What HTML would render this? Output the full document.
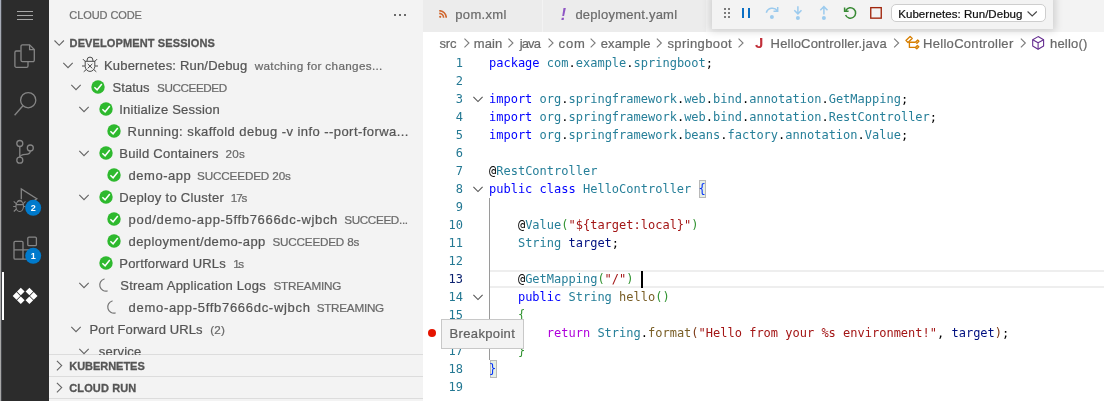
<!DOCTYPE html>
<html><head><meta charset="utf-8">
<style>
*{box-sizing:border-box;margin:0;padding:0}
html,body{width:1104px;height:401px;overflow:hidden;background:#fff}
body{position:relative;font-family:"Liberation Sans",sans-serif;font-size:13px;color:#616161}
.abs{position:absolute}
#act{left:0;top:0;width:48.6px;height:401px;background:#2c2c2c}
#side{left:48px;top:0;width:375px;height:401px;background:#f3f3f3}
#ed{left:423px;top:0;width:681px;height:401px;background:#fff}
.t{position:absolute;white-space:nowrap;line-height:22px;height:22px;color:#616161;font-size:13px;-webkit-text-stroke:0.22px currentColor}
.cl{position:absolute;white-space:pre;font-family:"DejaVu Sans Mono","Liberation Mono",monospace;font-size:12px;line-height:18px;height:18px;color:#000}
.ln{position:absolute;width:40px;text-align:right;font-family:"DejaVu Sans Mono","Liberation Mono",monospace;font-size:12px;line-height:18px;height:18px;color:#237893}
.k{color:#0000ff}.ty{color:#267f99}.s{color:#a31515}.v{color:#001080}.f{color:#795e26}.c{color:#af00db}
.b1{color:#0431fa}.b2{color:#319331}.b3{color:#7b3814}
.hl{position:absolute;left:0;width:374px;height:1px;background:#dcdcdc}
#root{position:absolute;left:0;top:0;width:1104px;height:401px;overflow:hidden;will-change:transform}
</style></head><body><div id="root">
<!-- activity bar -->
<div id="side" class="abs"></div>
<div id="act" class="abs"></div>
<div class="abs" style="left:0;top:0;width:1px;height:401px;background:linear-gradient(#a8aebb 0,#a3a5aa 70px,#a4a4a4 150px,#a8a8a8 401px)"></div>
<div class="abs" style="left:1px;top:0;width:1px;height:401px;background:#45474c"></div>
<div class="abs" style="left:2px;top:272px;width:2px;height:48px;background:#fff"></div>
<svg class="abs" style="left:0;top:0" width="49" height="401" viewBox="0 0 49 401" fill="none" stroke="#858585" stroke-width="1.3">
 <!-- hamburger -->
 <g stroke="#a6a6a6" stroke-width="1"><path d="M17 11.5H33M17 15.5H33M17 19.5H33"/></g>
 <!-- files -->
 <path d="M21 60.4V46.3a1.4 1.4 0 0 1 1.4-1.4H29.6L34.3 49.6V60.300a1.4 1.4 0 0 1-1.4 1.4H22.4a1.4 1.4 0 0 1-1.4-1.4Z"/>
 <path d="M29.6 45V49.6H34.3"/>
 <path d="M20.6 51H16.3a1.4 1.4 0 0 0-1.4 1.4V65.900a1.4 1.4 0 0 0 1.4 1.4H26.6a1.4 1.4 0 0 0 1.4-1.4V62"/>
 <!-- search -->
 <circle cx="28.2" cy="100.2" r="7.6"/>
 <path d="M22.9 105.8L14.6 115.2"/>
 <!-- scm -->
 <circle cx="19.8" cy="143.5" r="3"/><circle cx="19.8" cy="160.2" r="3"/><circle cx="30.3" cy="148" r="3"/>
 <path d="M19.8 146.5V157.2"/>
 <path d="M30.3 151C30.3 153.6 28.4 154.3 25.6 154.4C22.2 154.5 20.2 155.2 19.8 157.2"/>
 <!-- debug -->
 <path d="M21.3 199.2V189L36.800 198.800L33.200 201.200" stroke-width="1.3"/>
 <g stroke-width="1.1">
 <ellipse cx="19.700" cy="206.200" rx="3.8" ry="5.3"/>
 <path d="M16 204.600H23.400M17.400 202A2.4 2.4 0 0 1 22 202M15.900 206.500H13.200M16.200 203.600L13.700 201.400M16.400 209L13.800 211.500M23.500 206.500H25.600M23.200 203.600L25.500 201.400"/>
 </g>
 <!-- extensions -->
 <path d="M14 249.8V242.6a1.2 1.2 0 0 1 1.2-1.2H21.8a1.2 1.2 0 0 1 1.2 1.2V249.8ZM14 249.8H23V259.2H15.2a1.2 1.2 0 0 1-1.2-1.2ZM23 249.8H32V259.2H23" stroke-width="1.3"/>
 <rect x="27.8" y="237.1" width="8.6" height="8.6" rx="1.2"/>
 <!-- badges -->
 <g stroke="none"><circle cx="33.2" cy="207.8" r="8" fill="#007acc"/><circle cx="33.2" cy="255.8" r="8" fill="#007acc"/></g>
 <!-- cloud code -->
 <g stroke="none" fill="#fff">
  <path d="M20.8 287.7l3.8 3.8-3.8 3.8-3.8-3.8ZM29.4 287.7l3.8 3.8-3.8 3.8-3.8-3.8ZM16.5 292.1l3.8 3.8-3.8 3.8-3.8-3.8ZM33.7 292.1l3.8 3.8-3.8 3.8-3.8-3.8ZM20.8 296.5l3.8 3.8-3.8 3.8-3.8-3.8ZM29.4 296.5l3.8 3.8-3.8 3.8-3.8-3.8Z"/>
 </g>
</svg>
<div class="abs" style="left:25.2px;top:199.8px;width:16px;height:16px;line-height:16px;text-align:center;color:#fff;font-size:9px;font-weight:bold">2</div>
<div class="abs" style="left:25.2px;top:247.8px;width:16px;height:16px;line-height:16px;text-align:center;color:#fff;font-size:9px;font-weight:bold">1</div>

<!-- sidebar -->
<div class="hl" style="left:49px;top:354px"></div>
<div class="hl" style="left:49px;top:376px"></div>
<div class="hl" style="left:49px;top:398px"></div>
<svg class="abs" style="left:394px;top:14px" width="12" height="2"><rect x="0" y="0" width="2" height="2" fill="#6a6a6a"/><rect x="5" y="0" width="2" height="2" fill="#6a6a6a"/><rect x="10" y="0" width="2" height="2" fill="#6a6a6a"/></svg>
<!-- bug-off icon -->
<svg class="abs" style="left:80px;top:54px" width="20" height="20" viewBox="80 54 20 20" fill="none" stroke="#4a4a4a" stroke-width="1">
 <path d="M87.1 61.2V60A2.9 2.9 0 0 1 92.9 60V61.2"/>
 <path d="M84.8 61.3H95.2"/>
 <path d="M85.2 61.3V66.4A4.8 5 0 0 0 94.8 66.400V61.3"/>
 <path d="M85.2 61.4L82.9 59.100M94.8 61.400L97.100 59.100M85 66H82M95 66H98M86.300 69.500L83.700 71.800M93.700 69.500L96.300 71.800M87.700 63.900L92.300 68.400M92.300 63.900L87.700 68.400"/>
</svg>
<div class="abs" style="left:49px;top:340px;width:374px;height:15px;overflow:hidden"><div class="t" style="left:49.70px;top:1px;color:#555;letter-spacing:0.242px">service</div><svg class="abs" style="left:0;top:0;overflow:visible" width="1" height="1"><path d="M30.30 8.90 L35.00 13.70 L39.70 8.90" fill="none" stroke="#646464" stroke-width="1.1" stroke-linejoin="miter"/></svg></div>
<svg class="abs" style="left:0;top:0;overflow:visible" width="1" height="1"><path d="M54.50 40.50 L59.20 45.30 L63.90 40.50" fill="none" stroke="#646464" stroke-width="1.1" stroke-linejoin="miter"/></svg>
<svg class="abs" style="left:0;top:0;overflow:visible" width="1" height="1"><path d="M56.90 360.90 L61.70 365.60 L56.90 370.30" fill="none" stroke="#646464" stroke-width="1.1" stroke-linejoin="miter"/></svg>
<svg class="abs" style="left:0;top:0;overflow:visible" width="1" height="1"><path d="M56.90 382.90 L61.70 387.60 L56.90 392.30" fill="none" stroke="#646464" stroke-width="1.1" stroke-linejoin="miter"/></svg>
<svg class="abs" style="left:0;top:0;overflow:visible" width="1" height="1"><path d="M63.30 62.90 L68.00 67.70 L72.70 62.90" fill="none" stroke="#646464" stroke-width="1.1" stroke-linejoin="miter"/></svg>
<svg class="abs" style="left:0;top:0;overflow:visible" width="1" height="1"><path d="M71.30 84.90 L76.00 89.70 L80.70 84.90" fill="none" stroke="#646464" stroke-width="1.1" stroke-linejoin="miter"/></svg>
<svg class="abs" style="left:0;top:0;overflow:visible" width="1" height="1"><path d="M79.30 106.90 L84.00 111.70 L88.70 106.90" fill="none" stroke="#646464" stroke-width="1.1" stroke-linejoin="miter"/></svg>
<svg class="abs" style="left:0;top:0;overflow:visible" width="1" height="1"><path d="M79.30 150.90 L84.00 155.70 L88.70 150.90" fill="none" stroke="#646464" stroke-width="1.1" stroke-linejoin="miter"/></svg>
<svg class="abs" style="left:0;top:0;overflow:visible" width="1" height="1"><path d="M79.30 194.90 L84.00 199.70 L88.70 194.90" fill="none" stroke="#646464" stroke-width="1.1" stroke-linejoin="miter"/></svg>
<svg class="abs" style="left:0;top:0;overflow:visible" width="1" height="1"><path d="M79.30 282.90 L84.00 287.70 L88.70 282.90" fill="none" stroke="#646464" stroke-width="1.1" stroke-linejoin="miter"/></svg>
<svg class="abs" style="left:0;top:0;overflow:visible" width="1" height="1"><path d="M71.30 326.90 L76.00 331.70 L80.70 326.90" fill="none" stroke="#646464" stroke-width="1.1" stroke-linejoin="miter"/></svg>
<svg class="abs" style="left:90.2px;top:79px" width="16" height="16" viewBox="0 0 16 16"><circle cx="8" cy="8" r="6.7" fill="#2eb92e"/><path d="M4.4 8.3 L7.1 10.8 L11.8 5.1" fill="none" stroke="#fff" stroke-width="1.5"/></svg>
<svg class="abs" style="left:98.2px;top:101px" width="16" height="16" viewBox="0 0 16 16"><circle cx="8" cy="8" r="6.7" fill="#2eb92e"/><path d="M4.4 8.3 L7.1 10.8 L11.8 5.1" fill="none" stroke="#fff" stroke-width="1.5"/></svg>
<svg class="abs" style="left:106.2px;top:123px" width="16" height="16" viewBox="0 0 16 16"><circle cx="8" cy="8" r="6.7" fill="#2eb92e"/><path d="M4.4 8.3 L7.1 10.8 L11.8 5.1" fill="none" stroke="#fff" stroke-width="1.5"/></svg>
<svg class="abs" style="left:98.2px;top:145px" width="16" height="16" viewBox="0 0 16 16"><circle cx="8" cy="8" r="6.7" fill="#2eb92e"/><path d="M4.4 8.3 L7.1 10.8 L11.8 5.1" fill="none" stroke="#fff" stroke-width="1.5"/></svg>
<svg class="abs" style="left:106.2px;top:167px" width="16" height="16" viewBox="0 0 16 16"><circle cx="8" cy="8" r="6.7" fill="#2eb92e"/><path d="M4.4 8.3 L7.1 10.8 L11.8 5.1" fill="none" stroke="#fff" stroke-width="1.5"/></svg>
<svg class="abs" style="left:98.2px;top:189px" width="16" height="16" viewBox="0 0 16 16"><circle cx="8" cy="8" r="6.7" fill="#2eb92e"/><path d="M4.4 8.3 L7.1 10.8 L11.8 5.1" fill="none" stroke="#fff" stroke-width="1.5"/></svg>
<svg class="abs" style="left:106.2px;top:211px" width="16" height="16" viewBox="0 0 16 16"><circle cx="8" cy="8" r="6.7" fill="#2eb92e"/><path d="M4.4 8.3 L7.1 10.8 L11.8 5.1" fill="none" stroke="#fff" stroke-width="1.5"/></svg>
<svg class="abs" style="left:106.2px;top:233px" width="16" height="16" viewBox="0 0 16 16"><circle cx="8" cy="8" r="6.7" fill="#2eb92e"/><path d="M4.4 8.3 L7.1 10.8 L11.8 5.1" fill="none" stroke="#fff" stroke-width="1.5"/></svg>
<svg class="abs" style="left:98.2px;top:255px" width="16" height="16" viewBox="0 0 16 16"><circle cx="8" cy="8" r="6.7" fill="#2eb92e"/><path d="M4.4 8.3 L7.1 10.8 L11.8 5.1" fill="none" stroke="#fff" stroke-width="1.5"/></svg>
<svg class="abs" style="left:98px;top:277px" width="16" height="16" viewBox="0 0 16 16"><path d="M6.2 2 A6.2 6.2 0 0 0 9.3 14" fill="none" stroke="#757575" stroke-width="1.15" stroke-linecap="round"/></svg>
<svg class="abs" style="left:106px;top:299px" width="16" height="16" viewBox="0 0 16 16"><path d="M6.2 2 A6.2 6.2 0 0 0 9.3 14" fill="none" stroke="#757575" stroke-width="1.15" stroke-linecap="round"/></svg>

<!-- editor -->
<div id="ed" class="abs"></div>
<!-- tab bar -->
<div class="abs" style="left:423px;top:0;width:681px;height:32px;background:#f3f3f3"></div>
<div class="abs" style="left:423px;top:0;width:119px;height:32px;background:#ececec"></div>
<div class="abs" style="left:543px;top:0;width:163px;height:32px;background:#ececec"></div>
<!-- rss icon -->
<svg class="abs" style="left:439px;top:9.8px" width="8" height="8" viewBox="0 0 8 8" fill="none" stroke="#d0672f" stroke-width="1.6"><circle cx="1.2" cy="6.8" r="1.1" fill="#d0672f" stroke="none"/><path d="M0.2 3.4A4.4 4.4 0 0 1 4.6 7.8M0.2 0.7A7.1 7.1 0 0 1 7.3 7.8"/></svg>
<!-- current line -->
<div class="abs" style="left:489px;top:270px;width:615px;height:18px;border-top:2px solid #eeeeee;border-bottom:2px solid #eeeeee"></div>
<!-- indent guide -->
<div class="abs" style="left:489px;top:198px;width:1px;height:162px;background:#9a9a9a"></div>
<!-- bracket match boxes -->
<div class="abs" style="left:699px;top:180px;width:7px;height:18px;border:1px solid #b9b9b9;background:rgba(0,100,0,0.1)"></div>
<div class="abs" style="left:489.5px;top:360px;width:7px;height:18px;border:1px solid #b9b9b9;background:rgba(0,100,0,0.1)"></div>
<div class="ln" style="left:423px;top:54px;color:#237893">1</div>
<div class="cl" style="left:489px;top:54px"><span class="k">package</span> <span class="ty">com</span>.<span class="ty">example</span>.<span class="ty">springboot</span>;</div>
<div class="ln" style="left:423px;top:72px;color:#237893">2</div>
<div class="ln" style="left:423px;top:90px;color:#237893">3</div>
<div class="cl" style="left:489px;top:90px"><span class="k">import</span> <span class="ty">org</span>.<span class="ty">springframework</span>.<span class="ty">web</span>.<span class="ty">bind</span>.<span class="ty">annotation</span>.<span class="ty">GetMapping</span>;</div>
<div class="ln" style="left:423px;top:108px;color:#237893">4</div>
<div class="cl" style="left:489px;top:108px"><span class="k">import</span> <span class="ty">org</span>.<span class="ty">springframework</span>.<span class="ty">web</span>.<span class="ty">bind</span>.<span class="ty">annotation</span>.<span class="ty">RestController</span>;</div>
<div class="ln" style="left:423px;top:126px;color:#237893">5</div>
<div class="cl" style="left:489px;top:126px"><span class="k">import</span> <span class="ty">org</span>.<span class="ty">springframework</span>.<span class="ty">beans</span>.<span class="ty">factory</span>.<span class="ty">annotation</span>.<span class="ty">Value</span>;</div>
<div class="ln" style="left:423px;top:144px;color:#237893">6</div>
<div class="ln" style="left:423px;top:162px;color:#237893">7</div>
<div class="cl" style="left:489px;top:162px">@<span class="ty">RestController</span></div>
<div class="ln" style="left:423px;top:180px;color:#237893">8</div>
<div class="cl" style="left:489px;top:180px"><span class="k">public</span> <span class="k">class</span> <span class="ty">HelloController</span> <span class="b1">{</span></div>
<div class="ln" style="left:423px;top:198px;color:#237893">9</div>
<div class="ln" style="left:423px;top:216px;color:#237893">10</div>
<div class="cl" style="left:489px;top:216px">    @<span class="ty">Value</span><span class="b2">(</span><span class="s">&quot;${target:local}&quot;</span><span class="b2">)</span></div>
<div class="ln" style="left:423px;top:234px;color:#237893">11</div>
<div class="cl" style="left:489px;top:234px">    <span class="ty">String</span> <span class="v">target</span>;</div>
<div class="ln" style="left:423px;top:252px;color:#237893">12</div>
<div class="ln" style="left:423px;top:270px;color:#0b216f">13</div>
<div class="cl" style="left:489px;top:270px">    @<span class="ty">GetMapping</span><span class="b2">(</span><span class="s">&quot;/&quot;</span><span class="b2">)</span></div>
<div class="ln" style="left:423px;top:288px;color:#237893">14</div>
<div class="cl" style="left:489px;top:288px">    <span class="k">public</span> <span class="ty">String</span> <span class="f">hello</span><span class="b2">()</span></div>
<div class="ln" style="left:423px;top:306px;color:#237893">15</div>
<div class="cl" style="left:489px;top:306px">    <span class="b2">{</span></div>
<div class="cl" style="left:489px;top:324px">        <span class="c">return</span> <span class="ty">String</span>.<span class="f">format</span><span class="b3">(</span><span class="s">&quot;Hello from your %s environment!&quot;</span>, <span class="v">target</span><span class="b3">)</span>;</div>
<div class="ln" style="left:423px;top:342px;color:#237893">17</div>
<div class="cl" style="left:489px;top:342px">    <span class="b2">}</span></div>
<div class="ln" style="left:423px;top:360px;color:#237893">18</div>
<div class="cl" style="left:489px;top:360px"><span class="b1">}</span></div>
<div class="ln" style="left:423px;top:378px;color:#237893">19</div>
<!-- cursor -->
<div class="abs" style="left:640.5px;top:270.5px;width:2px;height:17px;background:#000"></div>
<!-- fold chevrons -->
<svg class="abs" style="left:0;top:0;overflow:visible" width="1" height="1"><path d="M473.40 96.85 L478.00 101.55 L482.60 96.85" fill="none" stroke="#555" stroke-width="1.1" stroke-linejoin="miter"/></svg>
<svg class="abs" style="left:0;top:0;overflow:visible" width="1" height="1"><path d="M473.40 186.85 L478.00 191.55 L482.60 186.85" fill="none" stroke="#555" stroke-width="1.1" stroke-linejoin="miter"/></svg>
<svg class="abs" style="left:0;top:0;overflow:visible" width="1" height="1"><path d="M473.40 294.85 L478.00 299.55 L482.60 294.85" fill="none" stroke="#555" stroke-width="1.1" stroke-linejoin="miter"/></svg>
<!-- breakpoint -->
<div class="abs" style="left:428.1px;top:329.1px;width:8px;height:8px;border-radius:50%;background:#e51400"></div>
<div class="abs" style="left:441px;top:319px;width:83px;height:29.5px;background:#f3f3f3;border:1px solid #c8c8c8"></div>

<!-- debug toolbar -->
<div class="abs" style="left:712px;top:-4px;width:341px;height:32.5px;background:#f3f3f3;box-shadow:0 0 8px 2px rgba(0,0,0,0.16)"></div>
<svg class="abs" style="left:712px;top:0" width="341" height="28" viewBox="712 0 341 28" fill="none">
 <g fill="#7c7c7c"><rect x="724" y="8" width="2" height="2"/><rect x="728" y="8" width="2" height="2"/><rect x="724" y="12" width="2" height="2"/><rect x="728" y="12" width="2" height="2"/><rect x="724" y="16" width="2" height="2"/><rect x="728" y="16" width="2" height="2"/></g>
 <g fill="#0a6fc4"><rect x="742" y="8" width="2" height="10"/><rect x="748" y="8" width="2" height="10"/></g>
 <g stroke="#9ccbee" stroke-width="1.5" fill="none">
  <path d="M766.3 12.8A6.2 6.2 0 0 1 777.4 10.900M777.7 6.900V11.300H773.500"/>
  <path d="M797.9 6.200V13.600M794.300 10.300L797.900 13.900L801.500 10.300"/>
  <path d="M823.9 14.500V6.800M820.300 10.200L823.900 6.600L827.500 10.200"/>
 </g>
 <g fill="#9ccbee"><circle cx="771.9" cy="17.100" r="2"/><circle cx="797.9" cy="17.900" r="2"/><circle cx="823.9" cy="17.900" r="2"/></g>
 <g stroke="#388a34" stroke-width="1.5" fill="none"><path d="M845.9 10.400A5.200 5.200 0 1 1 845.600 15M844.600 7.500V11.300H848.600"/></g>
 <rect x="870.75" y="7.650" width="10.500" height="10.500" stroke="#a1260d" stroke-width="1.35"/>
</svg>
<div class="abs" style="left:891px;top:4px;width:155px;height:18px;background:#fff;border:1px solid #cecece;border-radius:5px"></div>
<svg class="abs" style="left:1026px;top:9px" width="13" height="9" viewBox="0 0 13 9" fill="none"><path d="M1.6 2.5L6.2 6.900L10.800 2.500" stroke="#484848" stroke-width="1.1"/></svg>
<!-- breadcrumb icons -->
<svg class="abs" style="left:0;top:0;overflow:visible" width="1" height="1"><path d="M464.45 38.60 L468.95 43.00 L464.45 47.40" fill="none" stroke="#7c7c7c" stroke-width="1.1" stroke-linejoin="miter"/></svg>
<svg class="abs" style="left:0;top:0;overflow:visible" width="1" height="1"><path d="M508.45 38.60 L512.95 43.00 L508.45 47.40" fill="none" stroke="#7c7c7c" stroke-width="1.1" stroke-linejoin="miter"/></svg>
<svg class="abs" style="left:0;top:0;overflow:visible" width="1" height="1"><path d="M548.55 38.60 L553.05 43.00 L548.55 47.40" fill="none" stroke="#7c7c7c" stroke-width="1.1" stroke-linejoin="miter"/></svg>
<svg class="abs" style="left:0;top:0;overflow:visible" width="1" height="1"><path d="M590.65 38.60 L595.15 43.00 L590.65 47.40" fill="none" stroke="#7c7c7c" stroke-width="1.1" stroke-linejoin="miter"/></svg>
<svg class="abs" style="left:0;top:0;overflow:visible" width="1" height="1"><path d="M656.85 38.60 L661.35 43.00 L656.85 47.40" fill="none" stroke="#7c7c7c" stroke-width="1.1" stroke-linejoin="miter"/></svg>
<svg class="abs" style="left:0;top:0;overflow:visible" width="1" height="1"><path d="M738.55 38.60 L743.05 43.00 L738.55 47.40" fill="none" stroke="#7c7c7c" stroke-width="1.1" stroke-linejoin="miter"/></svg>
<svg class="abs" style="left:0;top:0;overflow:visible" width="1" height="1"><path d="M894.15 38.60 L898.65 43.00 L894.15 47.40" fill="none" stroke="#7c7c7c" stroke-width="1.1" stroke-linejoin="miter"/></svg>
<svg class="abs" style="left:0;top:0;overflow:visible" width="1" height="1"><path d="M1020.85 38.60 L1025.35 43.00 L1020.85 47.40" fill="none" stroke="#7c7c7c" stroke-width="1.1" stroke-linejoin="miter"/></svg>
<svg class="abs" style="left:903px;top:33px" width="20" height="20" viewBox="903 33 20 20" fill="none" stroke="#d67e00" stroke-width="1.35" stroke-linejoin="round"><path d="M905.9 40.4L910.1 36.4L912.2 38.5L908 42.6Z"/><path d="M909.4 42V47.4H915.3M909.4 42.2H915.5"/><path d="M915.7 42L917.7 40L918.9 41.2L916.9 43.2Z"/><path d="M915.4 47.4L917.4 45.4L918.8 46.8L916.8 48.8Z"/></svg>
<svg class="abs" style="left:1029px;top:33px" width="20" height="20" viewBox="1029 33 20 20" fill="none" stroke="#652d90" stroke-width="1.1" stroke-linejoin="round"><path d="M1038.1 36.6L1043.6 39.8V46L1038.1 49.2L1032.7 46V39.8Z"/><path d="M1032.7 39.8L1038.1 42.8L1043.6 39.8M1038.1 42.8V49.2"/></svg>
<div class="t" style="left:69.30px;top:4px;height:22px;line-height:22px;font-size:11px;color:#6f6f6f;letter-spacing:-0.078px;">CLOUD CODE</div>
<div class="t" style="left:69.60px;top:32px;height:22px;line-height:22px;font-size:11px;color:#555;letter-spacing:0.116px;font-weight:bold;-webkit-text-stroke:0.3px currentColor;">DEVELOPMENT SESSIONS</div>
<div class="t" style="left:104.00px;top:55px;height:22px;line-height:22px;font-size:13px;color:#555;letter-spacing:0.187px;">Kubernetes: Run/Debug</div>
<div class="t" style="left:254.70px;top:55px;height:22px;line-height:22px;font-size:11.7px;color:#6a6a6a;letter-spacing:0.339px;">watching for changes...</div>
<div class="t" style="left:112.60px;top:77px;height:22px;line-height:22px;font-size:13px;color:#555;letter-spacing:0.009px;">Status</div>
<div class="t" style="left:157.00px;top:77px;height:22px;line-height:22px;font-size:11.7px;color:#6a6a6a;letter-spacing:-0.405px;">SUCCEEDED</div>
<div class="t" style="left:119.30px;top:99px;height:22px;line-height:22px;font-size:13px;color:#555;letter-spacing:0.212px;">Initialize Session</div>
<div class="t" style="left:127.60px;top:121px;height:22px;line-height:22px;font-size:13px;color:#555;letter-spacing:0.439px;">Running: skaffold debug -v info --port-forwa...</div>
<div class="t" style="left:119.30px;top:143px;height:22px;line-height:22px;font-size:13px;color:#555;letter-spacing:0.254px;">Build Containers</div>
<div class="t" style="left:225.60px;top:143px;height:22px;line-height:22px;font-size:11.7px;color:#6a6a6a;letter-spacing:0.200px;">20s</div>
<div class="t" style="left:128.60px;top:165px;height:22px;line-height:22px;font-size:13px;color:#555;letter-spacing:0.513px;">demo-app</div>
<div class="t" style="left:197.00px;top:165px;height:22px;line-height:22px;font-size:11.7px;color:#6a6a6a;letter-spacing:-0.136px;">SUCCEEDED 20s</div>
<div class="t" style="left:119.30px;top:187px;height:22px;line-height:22px;font-size:13px;color:#555;letter-spacing:0.301px;">Deploy to Cluster</div>
<div class="t" style="left:230.70px;top:187px;height:22px;line-height:22px;font-size:11.7px;color:#6a6a6a;letter-spacing:-1.050px;">17s</div>
<div class="t" style="left:128.60px;top:209px;height:22px;line-height:22px;font-size:13px;color:#555;letter-spacing:0.675px;">pod/demo-app-5ffb7666dc-wjbch</div>
<div class="t" style="left:344.20px;top:209px;height:22px;line-height:22px;font-size:11.7px;color:#6a6a6a;letter-spacing:-0.338px;">SUCCEED...</div>
<div class="t" style="left:128.60px;top:231px;height:22px;line-height:22px;font-size:13px;color:#555;letter-spacing:0.410px;">deployment/demo-app</div>
<div class="t" style="left:272.40px;top:231px;height:22px;line-height:22px;font-size:11.7px;color:#6a6a6a;letter-spacing:-0.185px;">SUCCEEDED 8s</div>
<div class="t" style="left:119.30px;top:253px;height:22px;line-height:22px;font-size:13px;color:#555;letter-spacing:0.213px;">Portforward URLs</div>
<div class="t" style="left:233.30px;top:253px;height:22px;line-height:22px;font-size:11.7px;color:#6a6a6a;letter-spacing:-1.500px;">1s</div>
<div class="t" style="left:120.30px;top:275px;height:22px;line-height:22px;font-size:13px;color:#555;letter-spacing:0.236px;">Stream Application Logs</div>
<div class="t" style="left:273.50px;top:275px;height:22px;line-height:22px;font-size:11.7px;color:#6a6a6a;letter-spacing:-0.199px;">STREAMING</div>
<div class="t" style="left:128.60px;top:297px;height:22px;line-height:22px;font-size:13px;color:#555;letter-spacing:0.700px;">demo-app-5ffb7666dc-wjbch</div>
<div class="t" style="left:316.70px;top:297px;height:22px;line-height:22px;font-size:11.7px;color:#6a6a6a;letter-spacing:-0.249px;">STREAMING</div>
<div class="t" style="left:89.60px;top:319px;height:22px;line-height:22px;font-size:13px;color:#555;letter-spacing:0.103px;">Port Forward URLs</div>
<div class="t" style="left:210.30px;top:319px;height:22px;line-height:22px;font-size:11.7px;color:#6a6a6a;letter-spacing:0.154px;">(2)</div>
<div class="t" style="left:69.30px;top:355px;height:22px;line-height:22px;font-size:11px;color:#555;letter-spacing:-0.039px;font-weight:bold;-webkit-text-stroke:0.3px currentColor;">KUBERNETES</div>
<div class="t" style="left:69.30px;top:377px;height:22px;line-height:22px;font-size:11px;color:#555;letter-spacing:0.119px;font-weight:bold;-webkit-text-stroke:0.3px currentColor;">CLOUD RUN</div>
<div class="t" style="left:455.30px;top:3px;height:24px;line-height:24px;font-size:13px;color:#6b6b6b;letter-spacing:0.312px;">pom.xml</div>
<div class="t" style="left:560.80px;top:3px;height:24px;line-height:24px;font-size:16px;color:#8f56c4;letter-spacing:0.000px;font-weight:bold;-webkit-text-stroke:0.3px currentColor;font-style:italic;-webkit-text-stroke:0;">!</div>
<div class="t" style="left:575.40px;top:3px;height:24px;line-height:24px;font-size:13px;color:#6b6b6b;letter-spacing:0.244px;">deployment.yaml</div>
<div class="t" style="left:439.40px;top:33px;height:22px;line-height:22px;font-size:13px;color:#6a6a6a;letter-spacing:-0.065px;">src</div>
<div class="t" style="left:473.80px;top:33px;height:22px;line-height:22px;font-size:13px;color:#6a6a6a;letter-spacing:0.084px;">main</div>
<div class="t" style="left:519.70px;top:33px;height:22px;line-height:22px;font-size:13px;color:#6a6a6a;letter-spacing:-0.873px;">java</div>
<div class="t" style="left:558.60px;top:33px;height:22px;line-height:22px;font-size:13px;color:#6a6a6a;letter-spacing:0.835px;">com</div>
<div class="t" style="left:600.80px;top:33px;height:22px;line-height:22px;font-size:13px;color:#6a6a6a;letter-spacing:0.082px;">example</div>
<div class="t" style="left:667.40px;top:33px;height:22px;line-height:22px;font-size:13px;color:#6a6a6a;letter-spacing:0.400px;">springboot</div>
<div class="t" style="left:770.60px;top:33px;height:22px;line-height:22px;font-size:13px;color:#6a6a6a;letter-spacing:0.179px;">HelloController.java</div>
<div class="t" style="left:923.00px;top:33px;height:22px;line-height:22px;font-size:13px;color:#6a6a6a;letter-spacing:0.304px;">HelloController</div>
<div class="t" style="left:1050.00px;top:33px;height:22px;line-height:22px;font-size:13px;color:#6a6a6a;letter-spacing:0.201px;">hello()</div>
<div class="t" style="left:754.90px;top:32px;height:22px;line-height:22px;font-size:15px;color:#c2303a;letter-spacing:0.000px;font-weight:bold;-webkit-text-stroke:0.3px currentColor;-webkit-text-stroke:0;">J</div>
<div class="t" style="left:898.30px;top:5px;height:18px;line-height:18px;font-size:11.5px;color:#111;letter-spacing:0.035px;">Kubernetes: Run/Debug</div>
<div class="t" style="left:449.60px;top:323px;height:22px;line-height:22px;font-size:13px;color:#616161;letter-spacing:0.340px;">Breakpoint</div>
<div class="abs" style="left:755px;top:37.6px;width:5px;height:3px;background:#fff"></div>
</div></body></html>
